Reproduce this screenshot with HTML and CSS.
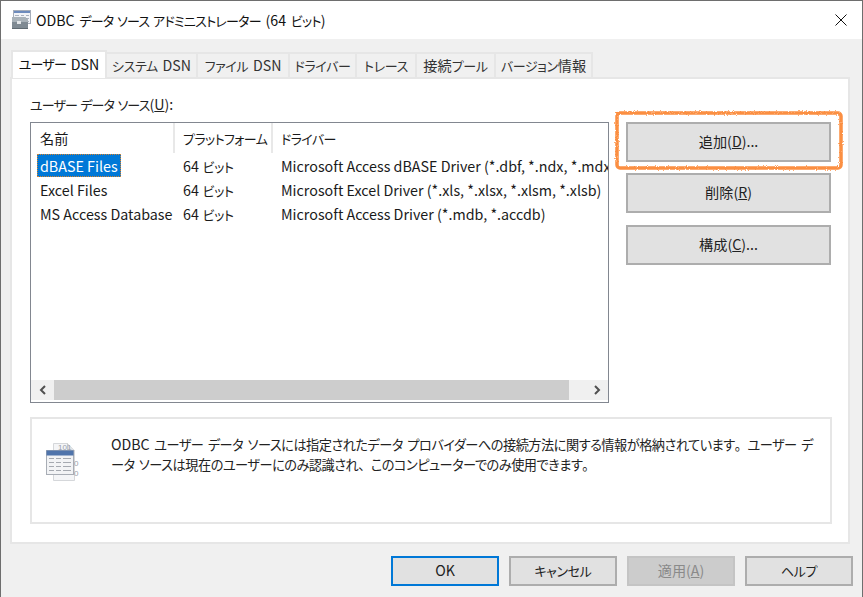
FILE: index.html
```html
<!DOCTYPE html>
<html lang="ja">
<head>
<meta charset="utf-8">
<title>ODBC</title>
<link rel="stylesheet" href="styles.css">
</head>
<body>
<div class="window">
  <header class="titlebar">
    <svg class="app-icon" width="20" height="20" viewBox="0 0 20 20">
      <rect x="2.500" y="0.500" width="17" height="13" fill="#f1f3f7" stroke="#a5adba"/>
      <rect x="3" y="1" width="16" height="2" fill="#6d8bbd"/>
      <path d="M4 5.500h4M10 5.500h3M15 5.500h3M15 8.500h3M15 11.500h3" stroke="#aab2bf"/>
      <path d="M1 7h13l3 3v9H1z" fill="#7f8a93"/>
      <path d="M1 7h13l3 3v2H1z" fill="#a9b2b9"/>
      <rect x="6" y="11" width="4" height="3" fill="#e3e6e9"/>
      <path d="M1 18.500h16" stroke="#5f6a72"/>
    </svg>
    <span class="title-text">ODBC <span class="ja">データ ソース アドミニストレーター</span> (64 <span class="ja">ビット</span>)</span>
    <svg class="close" width="12" height="12" viewBox="0 0 12 12"><path d="M0.500 0.500l11 11M11.500 0.500l-11 11" stroke="#111" stroke-width="1"/></svg>
  </header>
  <div class="content">
    <nav class="tabs">
      <span class="tab active"><span class="ja">ユーザー</span>&nbsp;DSN</span>
      <span class="tab t2"><span class="ja">システム</span>&nbsp;DSN</span>
      <span class="tab t3"><span class="ja">ファイル</span>&nbsp;DSN</span>
      <span class="tab t4"><span class="ja">ドライバー</span></span>
      <span class="tab t5"><span class="ja">トレース</span></span>
      <span class="tab t6">接続<span class="ja">プール</span></span>
      <span class="tab t7"><span class="ja">バージョン</span>情報</span>
    </nav>
    <section class="panel">
      <div class="top">
        <div class="left">
          <div class="list-label"><span class="ja">ユーザー データ ソース</span>(<u>U</u>):</div>
          <div class="list">
            <div class="list-head">
              <span class="col c1">名前</span>
              <span class="col c2"><span class="ja">プラットフォーム</span></span>
              <span class="col c3"><span class="ja">ドライバー</span></span>
            </div>
            <div class="rows">
              <div class="row"><span class="c1"><em class="sel">dBASE Files</em></span><span class="c2">64 <span class="ja">ビット</span></span><span class="c3">Microsoft Access dBASE Driver (*.dbf, *.ndx, *.mdx)</span></div>
              <div class="row"><span class="c1"><em>Excel Files</em></span><span class="c2">64 <span class="ja">ビット</span></span><span class="c3">Microsoft Excel Driver (*.xls, *.xlsx, *.xlsm, *.xlsb)</span></div>
              <div class="row"><span class="c1"><em>MS Access Database</em></span><span class="c2">64 <span class="ja">ビット</span></span><span class="c3">Microsoft Access Driver (*.mdb, *.accdb)</span></div>
            </div>
            <div class="hscroll">
              <span class="arrow"><svg width="10" height="10" viewBox="0 0 10 10"><path d="M7 1L3 5l4 4" fill="none" stroke="#505050" stroke-width="2"/></svg></span>
              <span class="thumb"></span>
              <span class="arrow right"><svg width="10" height="10" viewBox="0 0 10 10"><path d="M3 1l4 4-4 4" fill="none" stroke="#505050" stroke-width="2"/></svg></span>
            </div>
          </div>
        </div>
        <div class="actions">
          <div class="highlight-wrap">
            <button class="btn side">追加(<u>D</u>)...</button>
            <svg class="highlight" width="236" height="68" viewBox="0 0 236 68">
              <defs>
                <filter id="rough" x="-5%" y="-10%" width="110%" height="120%">
                  <feTurbulence type="fractalNoise" baseFrequency="0.9" numOctaves="1" seed="3"/>
                  <feDisplacementMap in="SourceGraphic" scale="3"/>
                  <feGaussianBlur stdDeviation="0.4"/>
                </filter>
              </defs>
              <rect x="5" y="5" width="224" height="55" rx="3" fill="none" stroke="#fb8f42" stroke-width="3.500" filter="url(#rough)"/>
            </svg>
          </div>
          <button class="btn side">削除(<u>R</u>)</button>
          <button class="btn side third">構成(<u>C</u>)...</button>
        </div>
      </div>
      <div class="info">
        <svg class="info-icon" width="40" height="42" viewBox="0 0 40 42">
          <path d="M8.500 1.500h14l7 7v30h-21z" fill="#f4f5f7" stroke="#d5d7da"/>
          <path d="M22.500 1.500v7h7" fill="#e3e5e8" stroke="#c8cacd"/>
          <text x="13" y="8" class="bits">101</text>
          <text x="29" y="24" class="bits">0</text>
          <text x="29" y="34" class="bits">0</text>
          <rect x="1.500" y="8.500" width="27" height="24" fill="#f2f3f5" stroke="#a8adb5"/>
          <rect x="1.500" y="8.500" width="27" height="5" fill="#4f74ab"/>
          <path d="M4 16.500h5M11 16.500h5M18 16.500h8M4 20.500h5M11 20.500h5M18 20.500h8M4 24.500h5M11 24.500h5M18 24.500h8M4 28.500h5M11 28.500h5M18 28.500h8" stroke="#a5a9b0"/>
        </svg>
        <p class="info-text"><span class="latin">ODBC</span> ユーザー データ ソースには指定されたデータ プロバイダーへの接続方法に関する情報が格納されています<span class="fw">。</span>ユーザー デ<br>ータ ソースは現在のユーザーにのみ認識され<span class="fw">、</span>このコンピューターでのみ使用できます<span class="fw">。</span></p>
      </div>
    </section>
    <footer class="footer">
      <button class="btn foot default">OK</button>
      <button class="btn foot"><span class="ja">キャンセル</span></button>
      <button class="btn foot disabled">適用(<u>A</u>)</button>
      <button class="btn foot"><span class="ja">ヘルプ</span></button>
    </footer>
  </div>
</div>
</body>
</html>
```
FILE: styles.css
```css
* { box-sizing: border-box; }
html, body { margin: 0; padding: 0; height: 100%; overflow: hidden; }
body {
  font-family: "Noto Sans CJK JP", "Noto Sans", sans-serif;
  font-size: 14.200px;
  font-feature-settings: "palt";
  word-spacing: 1.500px;
  color: #1a1a1a;
  background: #fff;
}
.ja { font-size: 13px; letter-spacing: -0.350px; }
.window {
  width: 863px;
  height: 597px;
  border: 1px solid #6e6e6e;
  border-bottom: 0;
  display: flex;
  flex-direction: column;
  overflow: hidden;
}
.titlebar {
  height: 38px;
  flex: none;
  background: #fff;
  display: flex;
  align-items: center;
  padding-left: 10px;
  position: relative;
}
.app-icon { margin-right: 5px; flex: none; }
.title-text { color: #111; white-space: nowrap; }
.title-text .ja { letter-spacing: -0.750px; }
.close { margin-left: auto; margin-right: 15px; }
.content {
  flex: 1;
  background: #f0f0f0;
  padding: 11px 9px 0 9px;
  display: flex;
  flex-direction: column;
}
.tabs { display: flex; align-items: flex-end; height: 27px; padding-left: 1px; position: relative; z-index: 1; flex: none; }
.tab {
  height: 25px;
  background: #f0f0f0;
  border: 2px solid #e6e6e6;
  border-bottom: 0;
  border-left: 0;
  display: flex;
  align-items: center;
  justify-content: center;
  white-space: nowrap;
  color: #333;
  padding-bottom: 1px;
}
.tab.active {
  width: 96px;
  height: 28px;
  background: #fff;
  border-left: 2px solid #e6e6e6;
  color: #111;
  margin-bottom: -1px;
  padding-bottom: 3px;
}
.tab.active .ja { letter-spacing: -0.800px; }
.t2 { width: 91px; }
.t3 { width: 92px; }
.t4 { width: 67px; }
.t5 { width: 60px; }
.t6 { width: 79px; }
.t7 { width: 97px; }
.panel {
  width: 840px;
  height: 467px;
  flex: none;
  background: #fff;
  border: 2px solid #e6e6e6;
  padding: 15px 0 0 18px;
  display: flex;
  flex-direction: column;
}
.top { display: flex; height: 309px; flex: none; }
.left { width: 579px; flex: none; }
.list-label { height: 28px; line-height: 20px; color: #222; white-space: nowrap; }
.list-label .ja { letter-spacing: -0.900px; }
.list {
  width: 579px;
  height: 281px;
  border: 1px solid #828790;
  display: flex;
  flex-direction: column;
  overflow: hidden;
  background: #fff;
}
.list-head { display: flex; height: 30px; flex: none; align-items: stretch; }
.list-head .col { display: flex; align-items: center; border-right: 2px solid #e8e8e8; }
.list-head .c3 { border-right: 0; }
.list-head .ja { letter-spacing: -0.600px; }
.c1 { width: 144px; padding-left: 9px; flex: none; white-space: nowrap; }
.c2 { width: 98px; padding-left: 8px; flex: none; white-space: nowrap; }
.c3 { padding-left: 8px; flex: none; white-space: nowrap; }
.rows { flex: 1; padding-top: 1px; }
.row { display: flex; height: 24px; line-height: 24px; font-size: 14.300px; word-spacing: 0; }
.row .c2 { word-spacing: 0.500px; }
.row em { font-style: normal; }
.row .c1 { padding-left: 6px; }
.row em { display: inline-block; padding: 0 3px; height: 23px; line-height: 23px; }
.sel { background: #0078d7; color: #fff; outline: 1px dotted #d9822b; outline-offset: -1px; }
.hscroll { height: 20px; flex: none; display: flex; background: #f0f0f0; margin-bottom: 2px; }
.arrow { width: 23px; display: flex; align-items: center; justify-content: center; flex: none; }
.arrow.right { width: 39px; justify-content: flex-end; padding-right: 6px; }
.thumb { flex: 1; background: #cdcdcd; }
.actions { margin-left: 17px; width: 205px; padding-top: 28px; display: flex; flex-direction: column; gap: 11px; flex: none; }
.highlight-wrap { position: relative; height: 40px; }
.highlight { position: absolute; left: -14px; top: -14px; pointer-events: none; }
.btn {
  font: inherit;
  font-feature-settings: "palt";
  word-spacing: inherit;
  background: #e1e1e1;
  border: 2px solid #adadad;
  color: #222;
  padding: 0 0 2px;
  display: flex;
  align-items: center;
  justify-content: center;
  white-space: nowrap;
}
.side { width: 205px; height: 40px; }
.third { margin-top: 1px; }
.info {
  width: 802px;
  height: 107px;
  margin-top: 14px;
  border: 2px solid #e6e6e6;
  display: flex;
  flex: none;
  padding: 15px 0 0 13px;
}
.info-icon { flex: none; margin-top: 8px; }
.bits { font-size: 8px; fill: #9aa0ab; font-family: "Liberation Sans", sans-serif; }
.info-text { margin: 0 0 0 26px; line-height: 20px; font-size: 13.200px; letter-spacing: -0.500px; word-spacing: 2px; color: #222; white-space: nowrap; }
.latin { font-size: 14.200px; letter-spacing: 0; }
.fw { font-feature-settings: normal; }
.footer { display: flex; gap: 10px; justify-content: flex-end; margin-top: 12px; flex: none; }
.foot { width: 108px; height: 30px; }
.default { border-color: #0078d7; }
.disabled { background: #cccccc; border-color: #c4c4c4; color: #8a8a8a; }
```
